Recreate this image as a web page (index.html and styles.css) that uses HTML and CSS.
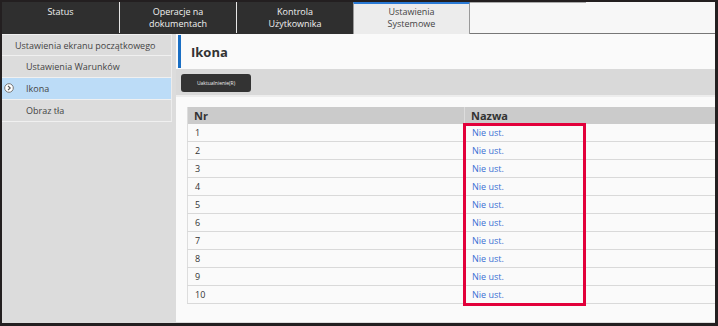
FILE: index.html
```html
<!DOCTYPE html>
<html lang="pl">
<head>
    <meta charset="UTF-8">
    <title>Ikona</title>
    <link rel="stylesheet" href="styles.css">
</head>
<body>

<div class="frame">
    <div class="tabs">
        <div class="tab">Status</div>
        <div class="tab">Operacje na<br>dokumentach</div>
        <div class="tab">Kontrola<br>Użytkownika</div>
        <div class="tab active">Ustawienia<br>Systemowe</div>
        <div class="tab-rest"></div>
    </div>

    <div class="page">
        <div class="sidebar">
            <div class="side-item top">Ustawienia ekranu początkowego</div>
            <div class="side-item">Ustawienia Warunków</div>
            <div class="side-item selected">
                <svg class="side-icon" width="10" height="10" viewBox="0 0 10 10">
                    <circle cx="5" cy="5" r="4.3" fill="#fff" stroke="#777" stroke-width="1"/>
                    <path d="M4 2.8 L6.2 5 L4 7.2" fill="none" stroke="#555" stroke-width="1.2"/>
                </svg>
                Ikona
            </div>
            <div class="side-item">Obraz tła</div>
        </div>

        <div class="main">
            <div class="title"><h1>Ikona</h1></div>
            <div class="toolbar">
                <button class="btn">Uaktualnienie(R)</button>
            </div>

            <div class="table-wrap">
                <table>
                    <thead>
                        <tr><th class="col-nr">Nr</th><th>Nazwa</th></tr>
                    </thead>
                    <tbody id="rows"></tbody>
                </table>
                <div class="highlight"></div>
            </div>
        </div>
    </div>
</div>

<script>
    const rows = document.getElementById('rows');
    for (let i = 1; i <= 10; i++) {
        const tr = document.createElement('tr');
        tr.innerHTML = '<td class="col-nr">' + i + '</td><td><a href="#">Nie ust.</a></td>';
        rows.appendChild(tr);
    }
</script>

</body>
</html>
```

FILE: styles.css
```css
body {
    margin: 0;
    padding: 2px 3px 3px 2px;
    background-color: #231f20;
    font-family: "Open Sans", Arial, sans-serif;
    font-size: 9px;
    color: #333;
}

.frame {
    width: 713px;
    height: 321px;
    background-color: #fafafa;
    display: flex;
    flex-direction: column;
    overflow: hidden;
}

/* top tabs */
.tabs {
    display: flex;
    height: 32px;
    background-color: #2f2f2f;
}

.tab {
    width: 117px;
    height: 31px;
    color: #f0f0f0;
    text-align: center;
    line-height: 12px;
    padding-top: 4px;
    box-sizing: border-box;
    border-left: 1px solid #e6e6e6;
}

.tab:first-child {
    border-left: none;
}

.tab.active {
    background-color: #ececec;
    color: #444;
    border-top: 2px solid #2a7ad5;
    border-left: 1px solid #999;
    border-right: 1px solid #999;
    height: 32px;
    padding-top: 2px;
}

.tab-rest {
    flex: 1;
    background-color: #f7f7f7;
    border-bottom: 1px solid #777;
    height: 31px;
}

.tab-rest::before {
    content: "";
    display: block;
    width: 116px;
    height: 1px;
    background-color: #aaa;
}

.page {
    flex: 1;
    display: flex;
    min-height: 0;
}

/* sidebar */
.sidebar {
    width: 174px;
    flex-shrink: 0;
    background-color: #dcdcdc;
}

.side-item {
    width: 170px;
    height: 22px;
    box-sizing: border-box;
    border-bottom: 1px solid #f0f0f0;
    border-right: 1px solid #ececec;
    padding-left: 24px;
    line-height: 21px;
    color: #444;
    position: relative;
}

.side-item.top {
    padding-left: 13px;
    border-top: 1px solid #f0f0f0;
}

.side-item.selected {
    background-color: #bcdcf7;
}

.side-icon {
    position: absolute;
    left: 2px;
    top: 5px;
}

/* main panel */
.main {
    flex: 1;
    min-width: 0;
    overflow: hidden;
    border-bottom: 1px solid #ddd;
}

.title {
    margin: 1px 0 1px 2px;
    height: 33px;
    border-left: 3px solid #1a6fc4;
    padding-left: 10px;
    display: flex;
    align-items: center;
}

h1 {
    margin: 0;
    font-size: 13px;
    color: #333;
}

.toolbar {
    height: 28px;
    background-color: #d9d9d9;
    padding: 5px 5px;
    box-sizing: border-box;
    border-bottom: 2px solid #ededed;
}

.btn {
    width: 70px;
    height: 18px;
    background-color: #333;
    color: #eee;
    border: none;
    border-radius: 3px;
    font-family: "Open Sans", Arial, sans-serif;
    font-size: 5px;
    padding: 0;
}

.table-wrap {
    position: relative;
    margin: 10px 0 0 11px;
    width: 560px;
}

table {
    width: 560px;
    border-collapse: collapse;
    border-left: 1px solid #ddd;
}

th {
    height: 17px;
    padding: 0 0 0 6px;
    background-color: #cbcbcb;
    text-align: left;
    font-size: 11px;
    color: #333;
    border-left: 1px solid #ddd;
}

td {
    height: 17px;
    padding: 0 0 0 7px;
    border-bottom: 1px solid #d9d9d9;
    border-left: 1px solid #ddd;
    color: #333;
}

.col-nr {
    width: 269px;
    border-left: none;
}

a {
    color: #3a70d4;
    text-decoration: none;
}

.highlight {
    position: absolute;
    left: 276px;
    top: 16px;
    width: 123px;
    height: 183px;
    border: 3px solid #e2003b;
    box-sizing: border-box;
}
```
